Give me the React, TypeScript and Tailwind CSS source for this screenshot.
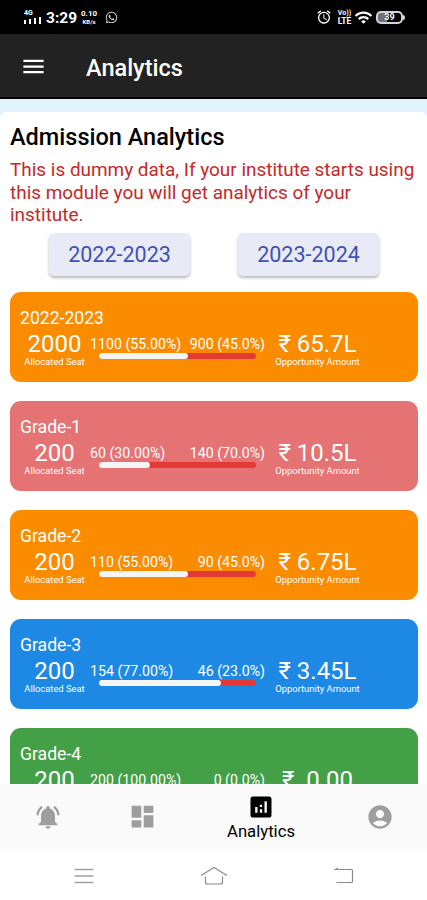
import { FaWhatsapp } from 'react-icons/fa'
import {
  MdAccountCircle,
  MdAlarm,
  MdAnalytics,
  MdDashboard,
  MdMenu,
  MdNotificationsActive,
  MdWifi,
} from 'react-icons/md'

type SeatCardProps = {
  title: string
  seats: string
  filled: string
  vacant: string
  percent: number
  amount: string
  color: string
}

const YEARS = ['2022-2023', '2023-2024']

const CARDS: SeatCardProps[] = [
  { title: '2022-2023', seats: '2000', filled: '1100 (55.00%)', vacant: '900 (45.0%)', percent: 57, amount: '₹ 65.7L', color: 'bg-[#fb8c00]' },
  { title: 'Grade-1', seats: '200', filled: '60 (30.00%)', vacant: '140 (70.0%)', percent: 32.5, amount: '₹ 10.5L', color: 'bg-[#e57373]' },
  { title: 'Grade-2', seats: '200', filled: '110 (55.00%)', vacant: '90 (45.0%)', percent: 57, amount: '₹ 6.75L', color: 'bg-[#fb8c00]' },
  { title: 'Grade-3', seats: '200', filled: '154 (77.00%)', vacant: '46 (23.0%)', percent: 78, amount: '₹ 3.45L', color: 'bg-[#1e88e5]' },
  { title: 'Grade-4', seats: '200', filled: '200 (100.00%)', vacant: '0 (0.0%)', percent: 100, amount: '₹  0.00', color: 'bg-[#43a047]' },
]

function StatusBar() {
  return (
    <div className="flex h-[34px] shrink-0 items-center justify-between bg-black pr-[22px] pl-6 text-white">
      <div className="flex items-center">
        <div className="flex w-[18px] flex-col">
          <span className="text-[7px] leading-[7px] font-bold">4G</span>
          <div className="flex h-[7px] items-end gap-[3px]">
            <span className="h-[4px] w-[2px] bg-white" />
            <span className="h-[5px] w-[2px] bg-white" />
            <span className="h-[6px] w-[2px] bg-white" />
            <span className="h-[7px] w-[2px] bg-white" />
          </div>
        </div>
        <span className="mt-[3px] ml-1 w-[31px] text-[15.5px] leading-none font-bold whitespace-nowrap">3:29</span>
        <div className="ml-1 flex w-4 flex-col text-center font-bold whitespace-nowrap">
          <span className="text-[8px] leading-[8px]">0.10</span>
          <span className="text-[6px] leading-[7px]">KB/s</span>
        </div>
        <FaWhatsapp className="ml-2 size-[13px] text-zinc-300" />
      </div>
      <div className="flex items-center">
        <MdAlarm className="size-4" />
        <div className="ml-1 flex w-[17px] flex-col text-center font-bold">
          <span className="text-[7px] leading-[8px]">Vo))</span>
          <span className="text-[8.5px] leading-[9px]">LTE</span>
        </div>
        <MdWifi className="ml-px size-[19px]" />
        <div className="ml-[3px] flex items-center">
          <div className="flex h-[13px] w-[27px] items-center justify-center rounded-[5px] border-2 border-zinc-300 bg-linear-to-r from-zinc-500 from-40% to-black to-40% text-[9px] leading-none font-bold">
            39
          </div>
          <span className="h-[5px] w-[2px] rounded-r bg-zinc-300" />
        </div>
      </div>
    </div>
  )
}

function SeatCard({ title, seats, filled, vacant, percent, amount, color }: SeatCardProps) {
  return (
    <article className={`h-[90px] shrink-0 rounded-[11px] pt-[14px] pl-[10px] text-white ${color}`}>
      <h3 className="text-[17.6px] leading-6 font-normal">{title}</h3>
      <div className="flex">
        <div className="w-[69px] text-center">
          <p className="pt-px text-[24px] leading-[26px]">{seats}</p>
          <p className="text-[9.4px] leading-[9px] whitespace-nowrap">Allocated Seat</p>
        </div>
        <div className="w-[177px] pt-[6px]">
          <div className="flex justify-between px-[1px] text-[14.200px] leading-[17px] whitespace-nowrap">
            <span>{filled}</span>
            <span>{vacant}</span>
          </div>
          <div className="ml-[10px] h-[6px] w-[157px] overflow-hidden rounded-full bg-[#e53935]">
            <div className="h-full rounded-r-sm bg-[#f5f5f5]" style={{ width: `${percent}%` }} />
          </div>
        </div>
        <div className="w-[103px] text-center">
          <p className="pt-px text-[24px] leading-[26px] whitespace-pre">{amount}</p>
          <p className="text-[9.4px] leading-[9px] whitespace-nowrap">Opportunity Amount</p>
        </div>
      </div>
    </article>
  )
}

function BottomNav() {
  return (
    <nav className="flex h-[67px] shrink-0 items-center bg-[#fafafa] pb-[2px] text-[#9e9e9e]">
      <div className="flex w-[95px] justify-center">
        <MdNotificationsActive className="size-[28px]" />
      </div>
      <div className="flex w-[95px] justify-center">
        <MdDashboard className="size-[29px]" />
      </div>
      <div className="flex w-[142px] flex-col items-center pt-px text-black">
        <MdAnalytics className="size-[28px]" />
        <span className="text-[16.700px] leading-[21px]">Analytics</span>
      </div>
      <div className="flex w-[95px] justify-center">
        <MdAccountCircle className="size-[28px]" />
      </div>
    </nav>
  )
}

function SystemNav() {
  return (
    <div className="flex h-[49px] shrink-0 items-center justify-between bg-white pr-[73px] pl-[74px] text-[#8a8a8a]">
      <svg width="20" height="18" viewBox="0 0 20 18" fill="none" stroke="#a3a3a3" strokeWidth="1.5">
        <path d="M0.5 2.5h19M0.5 9h19M0.5 15.5h19" />
      </svg>
      <svg width="28" height="20" viewBox="0 0 28 20" fill="none" stroke="currentColor" strokeWidth="1.2" strokeLinejoin="round">
        <path d="M1 9.5 14 1.500l13 8M5.500 10.500V16q0 2 2 2h13q2 0 2-2v-5.500" />
      </svg>
      <svg width="21" height="18" viewBox="0 0 21 18" fill="none" stroke="currentColor" strokeWidth="1.2">
        <path d="M1.500 2.500H18.500q1 0 1 1v11q0 1-1 1H3.500" />
        <path d="M0.500 3 5 0.500v2.500z" fill="currentColor" stroke="none" />
      </svg>
    </div>
  )
}

export default function App() {
  return (
    <div className="flex h-[900px] w-[427px] flex-col overflow-hidden bg-white font-[Roboto,sans-serif]">
      <StatusBar />
      <header className="flex h-[65px] shrink-0 items-center border-b-2 border-black bg-[#222222] pl-[20px] text-white">
        <MdMenu className="size-[27px] translate-y-[1px]" />
        <h1 className="mt-[7px] ml-[39px] text-[23.500px] font-medium">Analytics</h1>
      </header>

      <main className="min-h-0 flex-1 overflow-hidden bg-[#e1f2fd] pt-[13px]">
        <section className="flex h-full flex-col overflow-hidden rounded-t-md bg-white px-[10px] pt-[11px] pr-[9px]">
          <h2 className="shrink-0 text-[23.500px] leading-7 font-medium text-black">Admission Analytics</h2>
          <p className="mt-[8px] shrink-0 text-[18.950px] leading-[22.500px] whitespace-nowrap text-[#c62828]">
            This is dummy data, If your institute starts using
            <br />
            this module you will get analytics of your
            <br />
            institute.
          </p>
          <div className="mt-[6px] flex shrink-0 gap-[48px] pl-[39px]">
            {YEARS.map((year) => (
              <button
                key={year}
                type="button"
                className="h-[43px] w-[141px] rounded-[5px] bg-[#e8eaf6] pt-[3px] text-[21.500px] text-[#3f51b5] shadow-[0_2px_3px_rgba(0,0,0,0.28)]"
              >
                {year}
              </button>
            ))}
          </div>
          <div className="mt-[16px] flex shrink-0 flex-col gap-[19px]">
            {CARDS.map((card) => (
              <SeatCard key={card.title} {...card} />
            ))}
          </div>
        </section>
      </main>

      <BottomNav />
      <SystemNav />
    </div>
  )
}
